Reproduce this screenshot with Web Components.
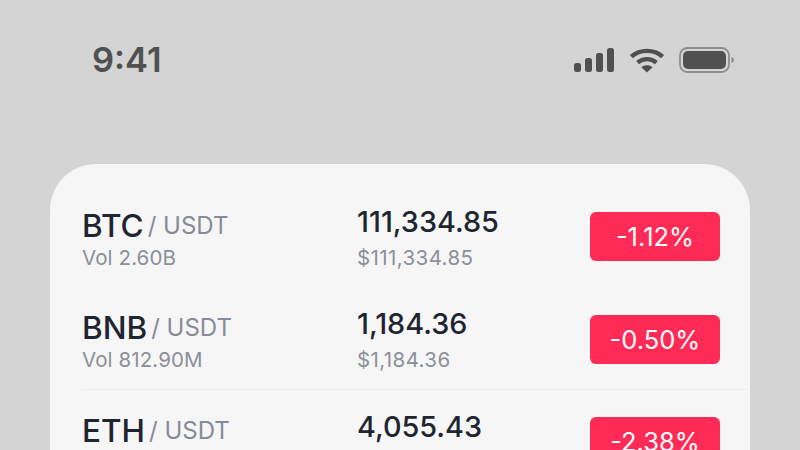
<!DOCTYPE html>
<html>
<head>
<meta charset="utf-8">
<style>
  html, body { margin: 0; height: 450px; overflow: hidden; background: #d4d4d4; font-family: Inter, "Liberation Sans", sans-serif; }
</style>
</head>
<body>
<status-bar time="9:41"></status-bar>
<market-list>
  <market-row base="BTC" vol="Vol 2.60B" price="111,334.85" usd="$111,334.85" change="-1.12%"></market-row>
  <market-row base="BNB" vol="Vol 812.90M" price="1,184.36" usd="$1,184.36" change="-0.50%" divider></market-row>
  <market-row base="ETH" vol="Vol 1.90B" price="4,055.43" usd="$4,055.43" change="-2.38%"></market-row>
</market-list>
<script>
class StatusBar extends HTMLElement {
  connectedCallback() {
    this.attachShadow({ mode: 'open' });
    this.shadowRoot.innerHTML = `
      <style>
        :host { display: flex; justify-content: space-between; align-items: center; height: 120px; padding: 0 66px 0 92px; box-sizing: border-box; color: #505050; }
        .time { font-size: 34.5px; font-weight: 600; line-height: 40px; }
        .icons { display: flex; align-items: center; gap: 14px; }
        svg { display: block; }
      </style>
      <span class="time">${this.getAttribute('time')}</span>
      <div class="icons">
        <svg width="41" height="26" viewBox="0 0 41 26" fill="#505050">
          <rect x="0" y="16" width="7" height="9" rx="2.5"/>
          <rect x="11" y="11" width="7" height="14" rx="2.5"/>
          <rect x="22" y="6" width="7" height="19" rx="2.5"/>
          <rect x="33" y="1" width="7" height="24" rx="2.5"/>
        </svg>
        <svg width="36" height="26" viewBox="0 0 36 26" fill="none" stroke="#505050" stroke-width="4.4">
          <path d="M2.4 9.6C11 1.9 25 1.9 33.6 9.6"/>
          <path d="M8.6 15.6C14 11 22 11 27.4 15.6"/>
          <path d="M18 25.5L12.4 20.2C15.6 17.7 20.4 17.7 23.6 20.2Z" fill="#505050" stroke="none"/>
        </svg>
        <svg width="55" height="26" viewBox="0 0 55 26" fill="none">
          <rect x="1" y="1" width="49" height="24" rx="7.5" stroke="#8e8e8e" stroke-width="1.8"/>
          <rect x="4" y="4" width="43" height="18" rx="5" fill="#505050"/>
          <path d="M52.5 10C54 10.6 55 11.6 55 13S54 15.4 52.5 16Z" fill="#8e8e8e"/>
        </svg>
      </div>`;
  }
}

class MarketList extends HTMLElement {
  connectedCallback() {
    this.attachShadow({ mode: 'open' });
    this.shadowRoot.innerHTML = `
      <style>
        :host { display: block; margin: 44px 50px 0; padding-top: 21.3px; height: 400px; box-sizing: border-box; background: #f6f6f6; border-radius: 46px 46px 0 0; }
      </style>
      <slot></slot>`;
  }
}

class MarketRow extends HTMLElement {
  connectedCallback() {
    const a = n => this.getAttribute(n);
    this.attachShadow({ mode: 'open' });
    this.shadowRoot.innerHTML = `
      <style>
        :host { display: grid; grid-template-columns: 275px 233px 130px; align-items: center; height: 102.5px; box-sizing: border-box; margin: 0 2px 0 32px; position: relative; }
        :host([divider])::after { content: ""; position: absolute; left: 0; right: 0; bottom: 0; height: 1px; background: #ececec; }
        .pair { padding-top: 5px; }
        .pair .sub { margin-top: 1px; letter-spacing: .1px; }
        .quote-col { padding-top: 1px; }
        .top { display: flex; align-items: center; gap: 4px; line-height: 36px; height: 36px; }
        .base { font-size: 31.5px; font-weight: 500; color: #1f2530; }
        .quote { font-size: 24px; color: #868b96; }
        .sub { font-size: 20.5px; letter-spacing: .4px; line-height: 26px; color: #8b9099; margin-top: 5px; }
        .price { font-size: 28.8px; font-weight: 500; color: #1f2530; line-height: 36px; }
        .badge { height: 49px; border-radius: 6px; background: #ff2a55; color: #fff; font-size: 25.5px; display: flex; align-items: center; justify-content: center; }
      </style>
      <div class="pair">
        <div class="top"><span class="base">${a('base')}</span><span class="quote">/ USDT</span></div>
        <div class="sub">${a('vol')}</div>
      </div>
      <div class="quote-col">
        <div class="price">${a('price')}</div>
        <div class="sub">${a('usd')}</div>
      </div>
      <div class="badge">${a('change')}</div>`;
  }
}

customElements.define('status-bar', StatusBar);
customElements.define('market-list', MarketList);
customElements.define('market-row', MarketRow);
</script>
</body>
</html>
